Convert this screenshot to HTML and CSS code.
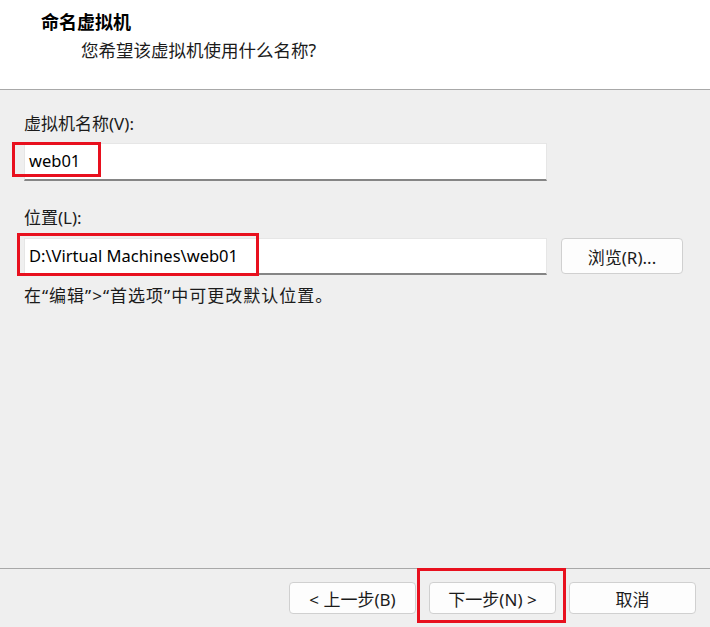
FILE: index.html
```html
<!DOCTYPE html>
<html lang="zh-CN">
<head>
<meta charset="utf-8">
<title>新建虚拟机向导</title>
<link rel="stylesheet" href="styles.css">
</head>
<body>
<div class="dialog">
  <header class="head">
    <div class="title">命名虚拟机</div>
    <div class="subtitle">您希望该虚拟机使用什么名称?</div>
  </header>
  <main class="body">
    <div class="label label-name">虚拟机名称(V):</div>
    <div class="row">
      <div class="field">web01</div>
    </div>
    <div class="label label-loc">位置(L):</div>
    <div class="row">
      <div class="field field-loc">D:\Virtual Machines\web01</div>
      <button class="btn btn-browse">浏览(R)...</button>
    </div>
    <div class="note">在“编辑”&gt;“首选项”中可更改默认位置。</div>
  </main>
  <footer class="foot">
    <button class="btn btn-foot">&lt; 上一步(B)</button>
    <button class="btn btn-foot">下一步(N) &gt;</button>
    <button class="btn btn-foot">取消</button>
  </footer>
  <div class="mark mark-name"></div>
  <div class="mark mark-loc"></div>
  <div class="mark mark-next"></div>
</div>
</body>
</html>
```
FILE: styles.css
```css
html, body {
  margin: 0;
  padding: 0;
  background: #efefef;
}
body {
  font-family: "Noto Sans", "Noto Sans CJK SC", sans-serif;
  color: #1b1b1b;
  font-size: 17px;
}
.dialog {
  position: relative;
  width: 710px;
  height: 627px;
  display: flex;
  flex-direction: column;
  background: #efefef;
  overflow: hidden;
}
.head {
  height: 89px;
  flex: none;
  background: #ffffff;
  border-bottom: 1px solid #a8a8a8;
  box-sizing: content-box;
}
.title {
  margin: 11px 0 0 41px;
  font-weight: bold;
  font-size: 18px;
  line-height: 22px;
  color: #000;
}
.subtitle {
  margin: 6px 0 0 81px;
  font-size: 17.5px;
  line-height: 22px;
  color: #1b1b1b;
}
.body {
  flex: 1;
  padding: 0 24px;
}
.label {
  line-height: 22px;
}
.label-name {
  margin-top: 23px;
  margin-bottom: 8px;
}
.label-loc {
  margin-top: 26px;
  margin-bottom: 9px;
}
.row {
  display: flex;
  align-items: flex-start;
}
.field {
  width: 523px;
  height: 38px;
  box-sizing: border-box;
  background: #fff;
  border: 1px solid #e6e6e6;
  border-bottom: 2px solid #858585;
  padding: 0 0 0 4px;
  font-size: 16.5px;
  line-height: 34px;
  color: #000;
}
.field-loc {
  height: 37px;
  line-height: 33px;
}
.btn {
  font-family: "Noto Sans", "Noto Sans CJK SC", sans-serif;
  font-size: 17px;
  color: #1b1b1b;
  background: #fdfdfd;
  border: 1px solid #d0d0d0;
  border-radius: 4px;
  padding: 0;
  box-sizing: border-box;
}
.btn-browse {
  margin-left: 14px;
  width: 122px;
  height: 36px;
}
.note {
  margin-top: 10px;
  line-height: 22px;
  letter-spacing: 1px;
}
.foot {
  height: 59px;
  flex: none;
  box-sizing: border-box;
  border-top: 1px solid #a8a8a8;
  display: flex;
  justify-content: flex-end;
  align-items: flex-start;
  padding: 13px 14px 0 0;
  gap: 13px;
}
.btn-foot {
  width: 127px;
  height: 32px;
}
.mark {
  position: absolute;
  border: 3px solid #e8101e;
  box-sizing: border-box;
}
.mark-name {
  left: 12px;
  top: 142px;
  width: 89px;
  height: 35px;
}
.mark-loc {
  left: 17px;
  top: 233px;
  width: 242px;
  height: 43px;
}
.mark-next {
  left: 417px;
  top: 568px;
  width: 149px;
  height: 55px;
}
```
